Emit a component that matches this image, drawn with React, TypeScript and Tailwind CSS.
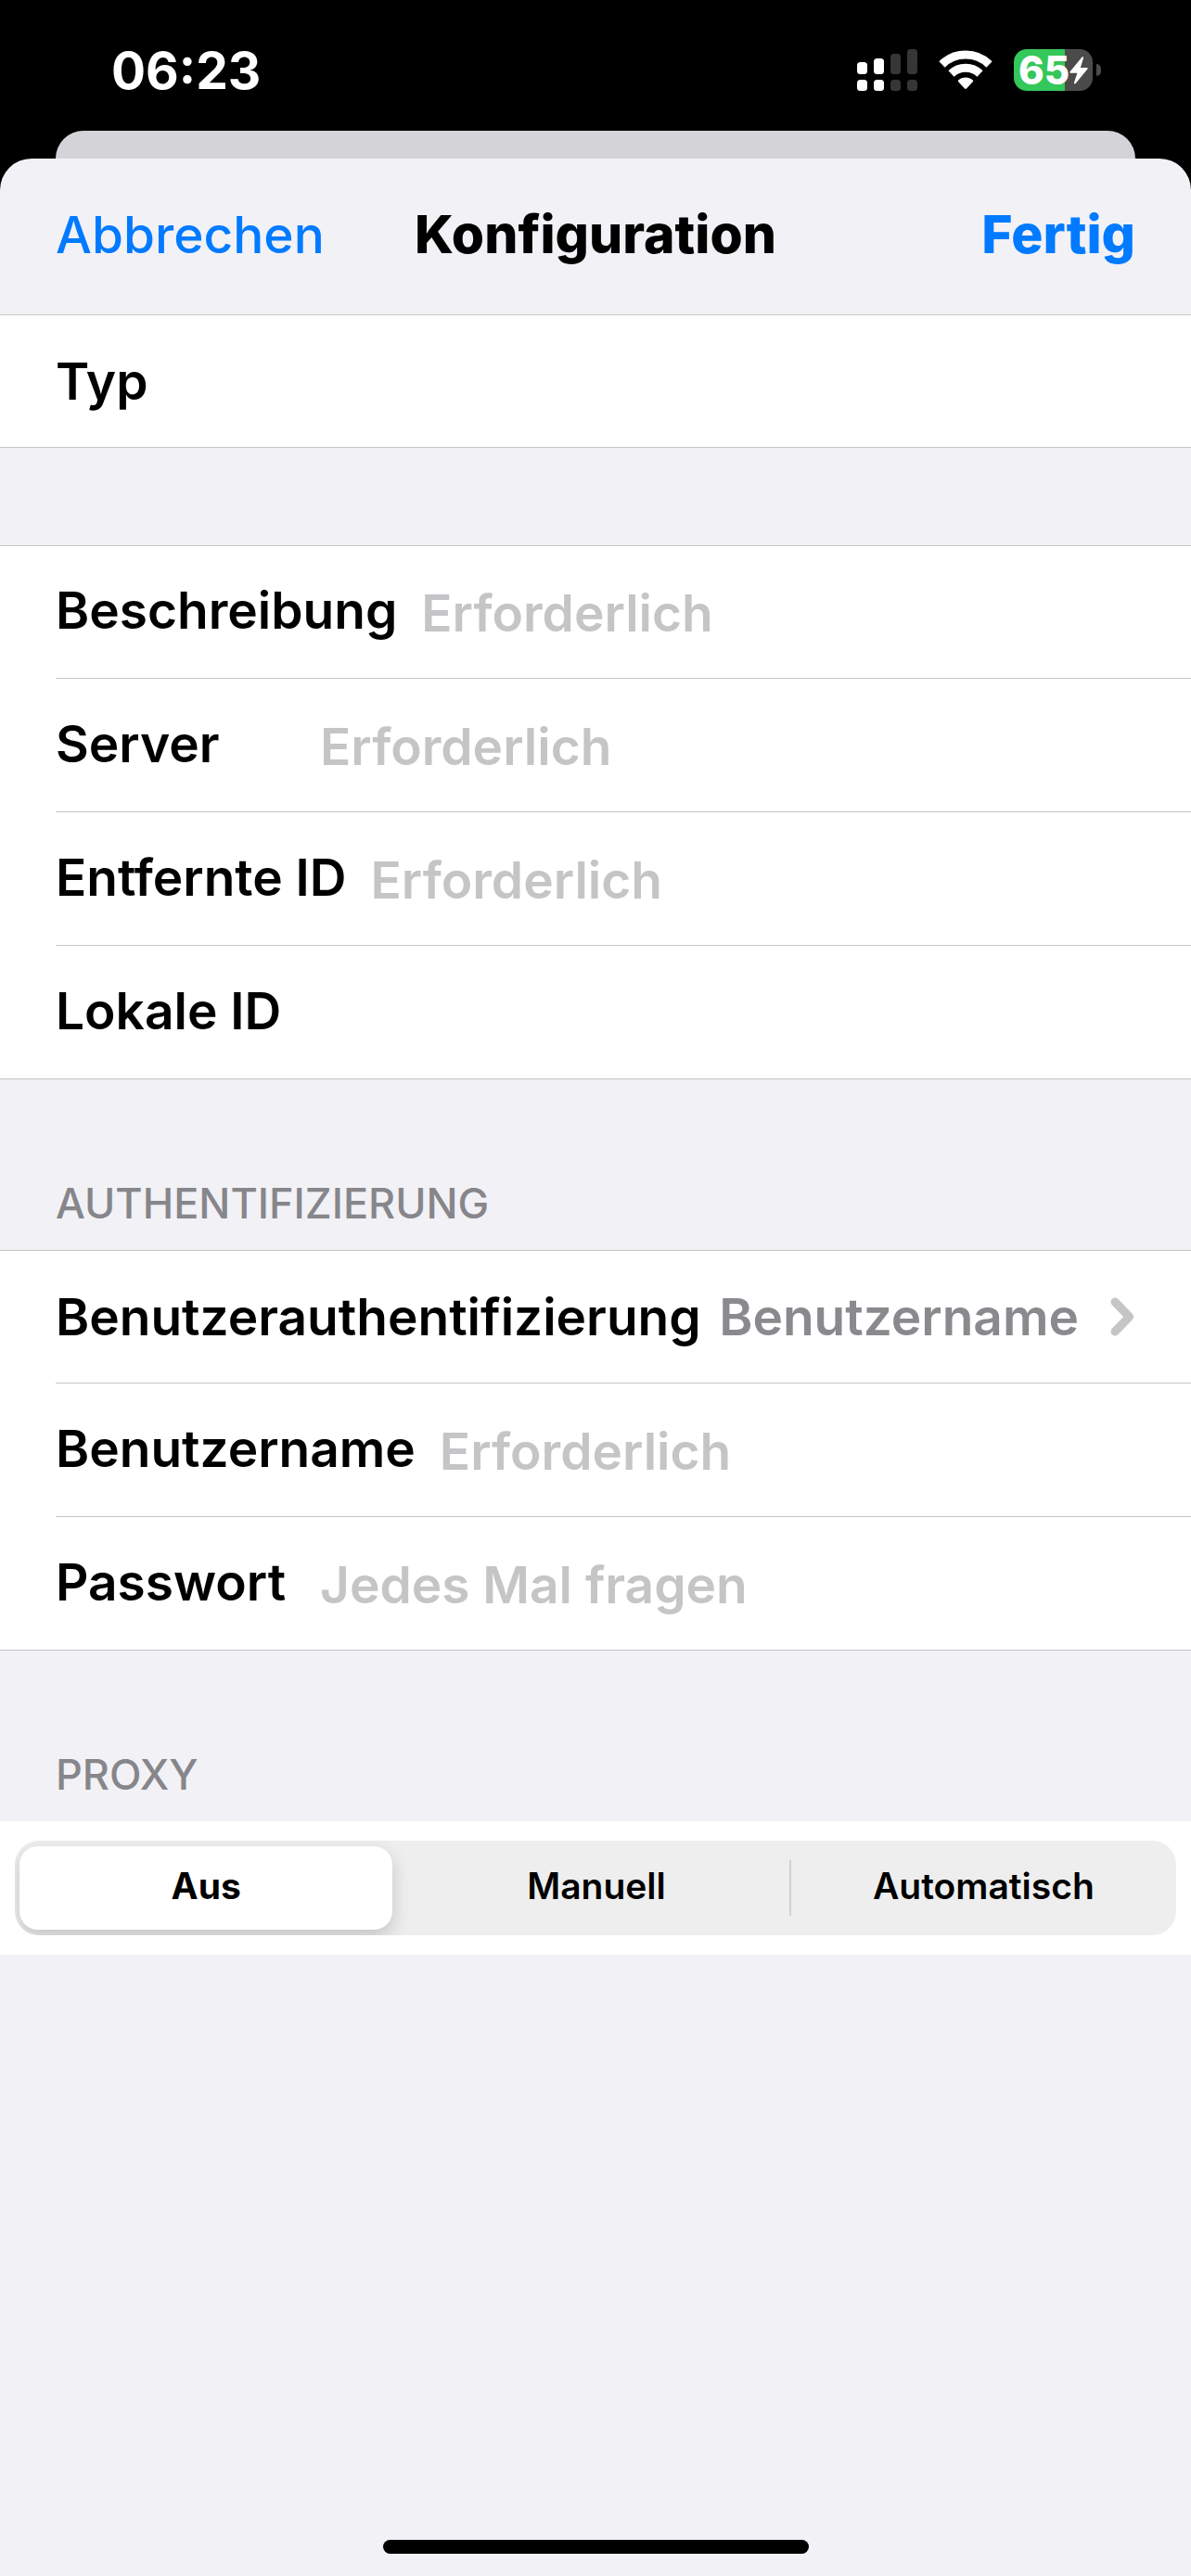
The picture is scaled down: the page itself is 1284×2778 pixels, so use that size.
import React, { useState } from 'react';

const proxyModes = ['Aus', 'Manuell', 'Automatisch'];

const rowClass =
  'ml-[60px] flex min-h-[144px] items-center border-b border-[#c6c6c8] pr-[60px] first:min-h-[143px] last:ml-0 last:pl-[60px]';

function SignalIcon() {
  return (
    <svg width="65" height="45" viewBox="0 0 65 45" aria-hidden="true">
      <g fill="#fff">
        <rect x="0" y="14" width="11" height="13" rx="3.5" />
        <rect x="18" y="10" width="11" height="17" rx="3.5" />
        <rect x="0" y="33" width="11" height="12" rx="3.5" />
        <rect x="18" y="33" width="11" height="12" rx="3.5" />
      </g>
      <g fill="#363636">
        <rect x="36" y="5" width="11" height="22" rx="3.5" />
        <rect x="54" y="0" width="11" height="27" rx="3.5" />
        <rect x="36" y="33" width="11" height="12" rx="3.5" />
        <rect x="54" y="33" width="11" height="12" rx="3.5" />
      </g>
    </svg>
  );
}

function WifiIcon() {
  return (
    <svg width="58" height="43" viewBox="0 0 58 43" aria-hidden="true">
      <g fill="none" stroke="#fff" strokeWidth="9">
        <path d="M3.5 15.5 A36.5 36.5 0 0 1 54.5 15.5" />
        <path d="M13.5 25.5 A22.5 22.5 0 0 1 44.5 25.5" />
      </g>
      <path
        d="M29 29.5 C32 29.5 34.8 30.6 36.8 32.4 C37.4 33 37.4 33.6 36.9 34.1 L30 41.6 C29.4 42.2 28.6 42.2 28 41.6 L21.1 34.1 C20.6 33.6 20.6 33 21.2 32.4 C23.2 30.6 26 29.5 29 29.5 Z"
        fill="#fff"
      />
    </svg>
  );
}

function Battery() {
  return (
    <div className="flex items-center gap-1">
      <div className="flex h-[45px] w-[85px] items-center justify-center rounded-[14px] bg-linear-to-r from-[#34c759] from-65% to-[#4b4b4b] to-65%">
        <span className="text-[42px] leading-[45px] font-extrabold">65</span>
        <svg width="20" height="30" viewBox="0 0 20 30" aria-hidden="true">
          <path
            d="M13.5 0.6 L0.6 16.2 C0 17 0.4 17.8 1.4 17.8 L8.4 17.8 L5 28 C4.6 29.4 5.8 29.9 6.6 29 L19.4 13.6 C20 12.8 19.6 12 18.6 12 L11.8 12 L15 1.8 C15.4 0.4 14.4 -0.3 13.5 0.6 Z"
            fill="#fff"
          />
        </svg>
      </div>
      <div className="h-[13px] w-[5px] rounded-r-full bg-[#4b4b4b]" />
    </div>
  );
}

type FieldProps = {
  id: string;
  label: string;
  placeholder?: string;
  type?: string;
};

function Field({ id, label, placeholder, type = 'text' }: FieldProps) {
  return (
    <div className={rowClass}>
      <label htmlFor={id} className="min-w-[259px] shrink-0 pb-1">
        {label}
      </label>
      <input
        id={id}
        type={type}
        placeholder={placeholder}
        className="ml-[26px] w-full min-w-0 bg-transparent pt-0.5 outline-none placeholder:text-[#c5c5c7]"
      />
    </div>
  );
}

function App() {
  const [proxy, setProxy] = useState('Aus');

  return (
    <div className="flex min-h-screen flex-col bg-black font-['Inter','Liberation_Sans',sans-serif] text-[55px] leading-[64px] font-semibold text-black">
      {/* Status bar */}
      <div className="flex h-[141px] items-center justify-between pt-[10px] pr-[97px] pl-[120px] text-white">
        <span className="font-bold">06:23</span>
        <div className="flex items-center gap-[23px]">
          <SignalIcon />
          <WifiIcon />
          <Battery />
        </div>
      </div>

      {/* Edge of the sheet behind */}
      <div className="mx-[60px] h-[30px] rounded-t-[30px] bg-[#d4d3d8]" />

      <main className="flex flex-1 flex-col rounded-t-[34px] bg-[#f2f1f6]">
        <header className="grid h-[168px] grid-cols-[1fr_auto_1fr] items-center px-[60px] pb-1">
          <button className="justify-self-start font-medium text-[#007aff]">Abbrechen</button>
          <h1 className="text-[57px] font-extrabold">Konfiguration</h1>
          <button className="justify-self-end text-[57px] font-extrabold text-[#007aff]">Fertig</button>
        </header>

        <section className="border-t border-[#c6c6c8] bg-white">
          <div className={rowClass}>
            <button className="w-full text-left">Typ</button>
          </div>
        </section>

        <section className="mt-[105px] border-t border-[#c6c6c8] bg-white">
          <Field id="description" label="Beschreibung" placeholder="Erforderlich" />
          <Field id="server" label="Server" placeholder="Erforderlich" />
          <Field id="remote-id" label="Entfernte ID" placeholder="Erforderlich" />
          <Field id="local-id" label="Lokale ID" />
        </section>

        <h2 className="flex h-[184px] items-end px-[60px] pb-[18px] text-[45px] font-medium text-[#86868b]">
          AUTHENTIFIZIERUNG
        </h2>
        <section className="border-t border-[#c6c6c8] bg-white">
          <div className={rowClass}>
            <button className="flex w-full items-center justify-between text-left">
              <span>Benutzerauthentifizierung</span>
              <span className="flex items-center gap-[34px] text-[#8a8a8e]">
                Benutzername
                <svg width="27" height="42" viewBox="0 0 27 42" aria-hidden="true">
                  <path
                    d="M5 5 L20.5 21 L5 37"
                    fill="none"
                    stroke="#c5c5c7"
                    strokeWidth="9"
                    strokeLinecap="round"
                    strokeLinejoin="round"
                  />
                </svg>
              </span>
            </button>
          </div>
          <Field id="username" label="Benutzername" placeholder="Erforderlich" />
          <Field id="password" label="Passwort" placeholder="Jedes Mal fragen" type="password" />
        </section>

        <h2 className="flex h-[184px] items-end px-[60px] pb-[18px] text-[45px] font-medium text-[#86868b]">
          PROXY
        </h2>
        <section className="bg-white px-4 py-[21px]">
          <div
            role="radiogroup"
            aria-label="Proxy"
            className="grid h-[102px] grid-cols-3 overflow-hidden rounded-[26px] bg-[#eeeeee] text-[39px] leading-[48px]"
          >
            {proxyModes.map((mode) => (
              <label
                key={mode}
                className="relative my-[21px] flex cursor-pointer items-center justify-center border-l-2 border-[#d0d0d2] pb-1 first:border-transparent has-checked:z-10 has-checked:my-[6px] has-checked:mr-[10px] has-checked:ml-[5px] has-checked:rounded-[20px] has-checked:border-0 has-checked:bg-white has-checked:font-bold has-checked:shadow-[0_8px_20px_rgba(0,0,0,0.18)] [&:has(:checked)+label]:border-transparent"
              >
                <input
                  type="radio"
                  name="proxy"
                  value={mode}
                  checked={proxy === mode}
                  onChange={() => setProxy(mode)}
                  className="sr-only"
                />
                {mode}
              </label>
            ))}
          </div>
        </section>

        {/* Home indicator */}
        <div className="mx-auto mt-auto mb-6 h-[15px] w-[459px] rounded-full bg-black" />
      </main>
    </div>
  );
}

export default App;
